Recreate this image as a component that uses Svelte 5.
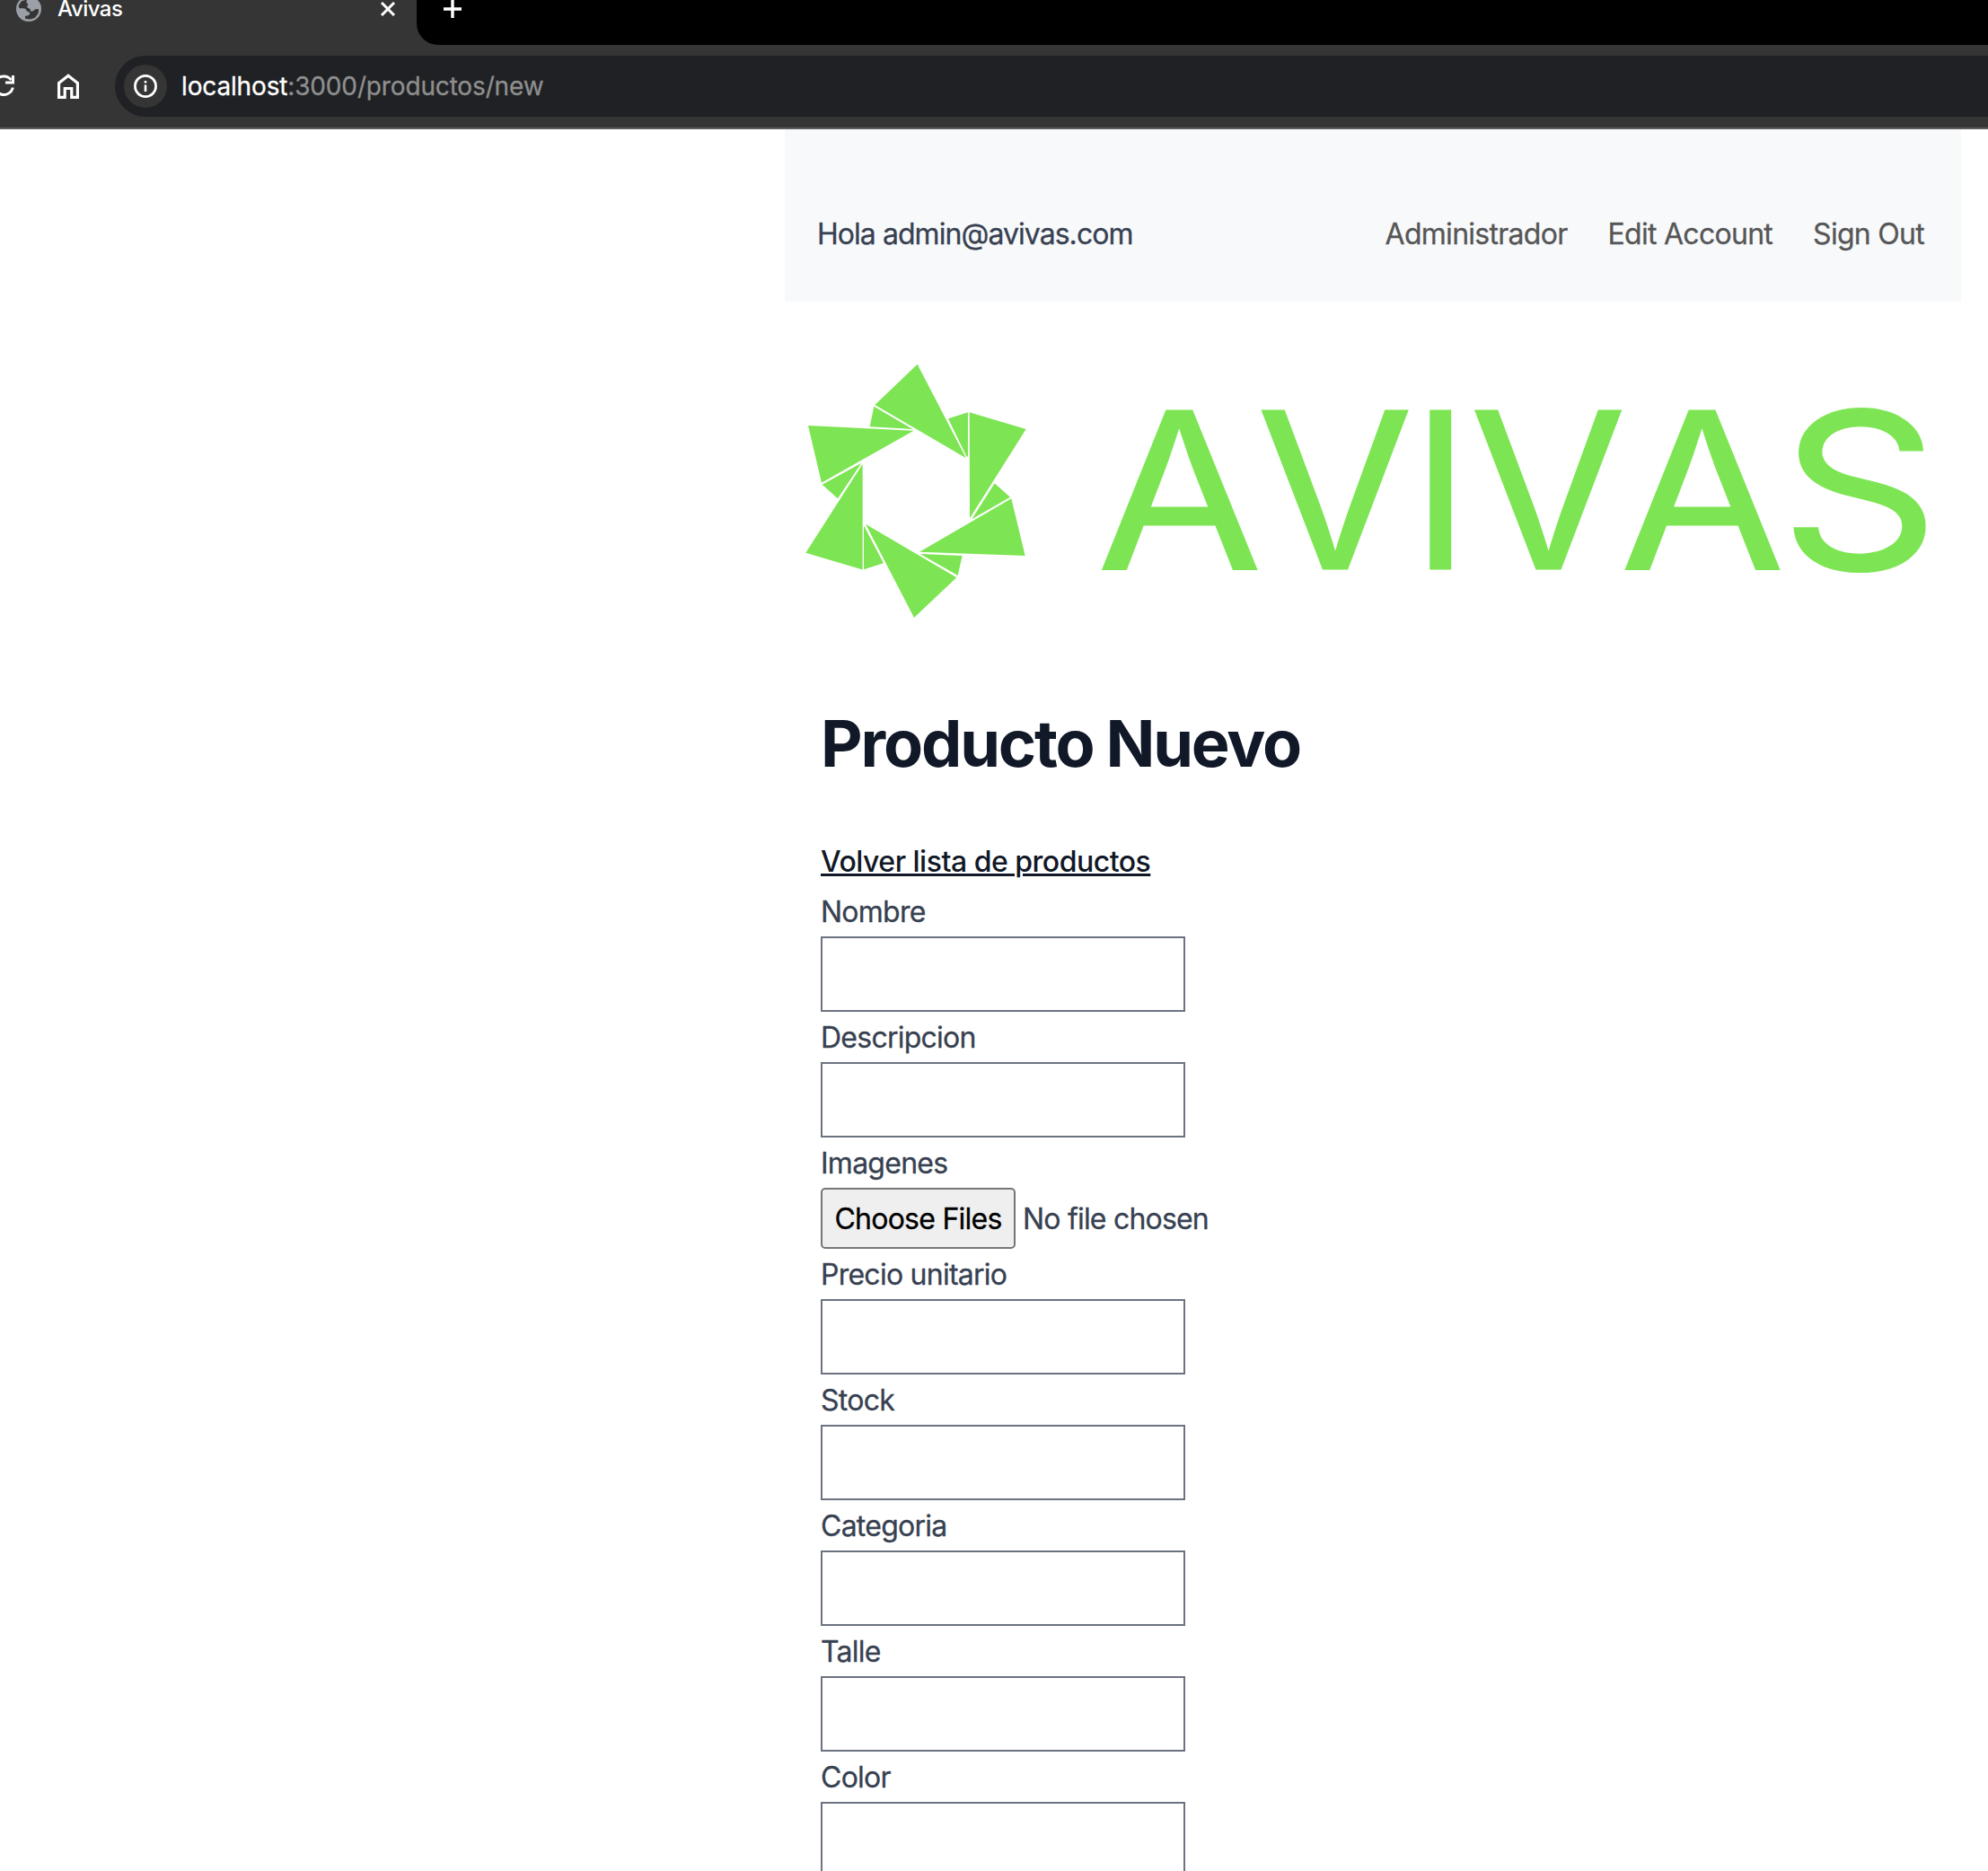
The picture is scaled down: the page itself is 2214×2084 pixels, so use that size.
<script>
  const fields = [
    { label: 'Nombre' },
    { label: 'Descripcion' },
    { label: 'Imagenes', file: true },
    { label: 'Precio unitario' },
    { label: 'Stock' },
    { label: 'Categoria' },
    { label: 'Talle' },
    { label: 'Color' }
  ];
  const links = ['Administrador', 'Edit Account', 'Sign Out'];

  // Wordmark letters: left offset and horizontal stretch of each one.
  const letters = [
    { ch: 'A', x: 1221, sx: 1.103 },
    { ch: 'V', x: 1399, sx: 1.042 },
    { ch: 'I', x: 1571.5, sx: 1 },
    { ch: 'V', x: 1636.5, sx: 1.042 },
    { ch: 'A', x: 1803.5, sx: 1.1 },
    { ch: 'S', x: 1982.5, sx: 1.132 }
  ];
</script>

<div class="window">
  <header class="chrome">
    <div class="tabstrip">
      <div class="tab">
        <svg class="globe" viewBox="0 0 28 28" width="28" height="28">
          <circle cx="14" cy="14" r="14" fill="#9aa0a6" />
          <path d="M3.300 13.300L2.700 10L6 5.300L12 3.500L11.300 6.700L13.300 8.700L12 12L15.300 14L16.700 17L19.300 16Q21 13.500 24.700 14Q25.500 17 24.200 19.500L20.700 24L15.300 25.500L10 24.700V22L14.700 20.700L15.300 18L12 16.500L10.500 14L8.700 13.300z" fill="#353535" />
        </svg>
        <span class="tab-title">Avivas</span>
        <svg class="close" viewBox="0 0 16 16" width="16" height="16"><path d="M1 1l14 14M15 1L1 15" stroke="#fff" stroke-width="3" /></svg>
      </div>
      <div class="newtab">
        <svg viewBox="0 0 20 20" width="20" height="20"><path d="M10 0v20M0 10h20" stroke="#fff" stroke-width="3.400" /></svg>
      </div>
    </div>
    <div class="toolbar">
      <svg class="reload" viewBox="0 0 17 28" width="17" height="28">
        <path d="M12.500 7A10.300 10.300 0 1 0 14.300 15.500" fill="none" stroke="#fff" stroke-width="3" />
        <path d="M14.500 2v8H6" fill="none" stroke="#fff" stroke-width="3" />
      </svg>
      <svg class="home" viewBox="0 0 24 28" width="24" height="28">
        <path d="M1.600 10.500L12 2.300l10.400 8.200v15.800h-6.600v-9.800H8.200v9.800H1.600z" fill="none" stroke="#fff" stroke-width="3.200" />
      </svg>
      <div class="omnibox">
        <span class="info">
          <svg viewBox="0 0 26 26" width="26" height="26">
            <circle cx="13" cy="13" r="11.600" fill="none" stroke="#fff" stroke-width="2.700" />
            <path d="M13 11.500v7.500M13 7v2.600" stroke="#fff" stroke-width="2.600" />
          </svg>
        </span>
        <span class="url"><b>localhost</b>:3000/productos/new</span>
      </div>
    </div>
  </header>

  <main>
    <nav>
      <span class="hola">Hola admin@avivas.com</span>
      <div class="links">
        {#each links as link}<span>{link}</span>{/each}
      </div>
    </nav>

    <div class="brand">
      <svg class="star" viewBox="0 0 840 930" width="280" height="310" fill="#7de553">
        <path d="M425 47L283 183L588 361zM280 188L410 264L266 256z" />
        <path d="M599 208L788 264L600 562zM594 208L528 229L589 355L594 356z" />
        <path d="M739 496L785 687L432 674zM683 445L735 491L607 565z" />
        <path d="M252 581L556 760L414 894zM434 681L575 687L560 753z" />
        <path d="M242 380V733H239L52 677zM246 588V733L312 712L247 588z" />
        <path d="M60 252L413 269L105 443zM107 449L238 377L159 496z" />
      </svg>
      <svg class="wordmark" viewBox="1200 390 984 310" width="984" height="310">
        {#each letters as l}
          <text class="word" transform="translate({l.x} 634.4) scale({l.sx} 1)">{l.ch}</text>
        {/each}
      </svg>
    </div>

    <section>
      <h1>Producto Nuevo</h1>
      <a href="#productos">Volver lista de productos</a>
      <form>
        {#each fields as field}
          <div class="label">{field.label}</div>
          {#if field.file}
            <div class="file"><button type="button">Choose Files</button><span>No file chosen</span></div>
          {:else}
            <input type="text" aria-label={field.label} />
          {/if}
        {/each}
      </form>
    </section>
  </main>
</div>

<style>
  :global(body) { background: #fff; overflow: hidden; }
  .window { width: 2214px; height: 2084px; overflow: hidden; font-family: Inter, 'Liberation Sans', sans-serif; background: #fff; }
  .chrome { height: 142px; background: #353535; border-bottom: 2px solid #5e5e5e; }
  .tabstrip { display: flex; height: 50px; }
  .tab { width: 464px; height: 20px; display: flex; align-items: center; box-sizing: border-box; padding: 0 24px 0 18px; }
  .globe { flex: none; }
  .tab-title { color: #fff; font-size: 24px; font-weight: 500; margin-left: 18px; flex: 1; line-height: 20px; letter-spacing: -0.5px; }
  .newtab { flex: 1; background: #000; border-bottom-left-radius: 24px; padding-left: 30px; }
  .newtab svg { display: block; }
  .toolbar { height: 92px; display: flex; align-items: center; }
  .reload { margin-right: 47px; }
  .home { margin-right: 40px; }
  .omnibox { flex: 1; height: 68px; background: #202124; border-radius: 34px 0 0 34px; display: flex; align-items: center; padding-left: 10px; }
  .info { width: 48px; height: 48px; border-radius: 50%; background: #353535; display: flex; align-items: center; justify-content: center; margin-right: 16px; }
  .url { color: #8f8f8f; font-size: 28px; letter-spacing: -0.15px; -webkit-text-stroke: 0.3px currentColor; }
  .url b { color: #fff; font-weight: 400; }
  main { width: 1310px; margin-left: 874px; }
  nav { height: 192px; background: #f8f9fb; box-sizing: border-box; padding: 45px 41px 0 36px; display: flex; justify-content: space-between; align-items: flex-start; line-height: 144px; font-size: 32px; -webkit-text-stroke: 0.3px currentColor; }
  .hola { color: #374151; letter-spacing: -0.95px; }
  .links { display: flex; gap: 45px; color: #565656; letter-spacing: -0.72px; }
  .brand { display: flex; margin: 54px 0 0 6px; height: 310px; }
  .wordmark { margin-left: 40px; }
  .word { font-size: 243.800px; font-weight: 400; fill: #7de553; stroke: #7de553; stroke-width: 1.200px; }
  section { padding-left: 40px; display: flex; flex-direction: column; align-items: flex-start; }
  h1 { margin: 88px 0 0; font-size: 72px; line-height: 80px; font-weight: 700; color: #111827; letter-spacing: -2.15px; word-spacing: -1px; }
  a { margin-top: 68px; font-size: 32px; line-height: 48px; font-weight: 500; color: #111827; text-decoration: underline; text-decoration-thickness: 3px; letter-spacing: -0.5px; }
  form { margin-top: 3px; }
  .label { height: 56px; line-height: 58px; font-size: 32px; color: #374151; letter-spacing: -0.75px; -webkit-text-stroke: 0.3px currentColor; }
  input { display: block; box-sizing: border-box; width: 406px; height: 84px; border: 2px solid #6b7280; background: #fff; border-radius: 0; }
  .file { display: flex; align-items: center; height: 68px; font-size: 32px; color: #374151; letter-spacing: -0.8px; -webkit-text-stroke: 0.3px currentColor; }
  button { box-sizing: border-box; width: 217px; height: 68px; padding: 0; border: 2px solid #767676; border-radius: 5px; background: #efefef; color: #000; font: 400 32px Inter, sans-serif; letter-spacing: -0.75px; margin-right: 8px; white-space: nowrap; }
</style>
